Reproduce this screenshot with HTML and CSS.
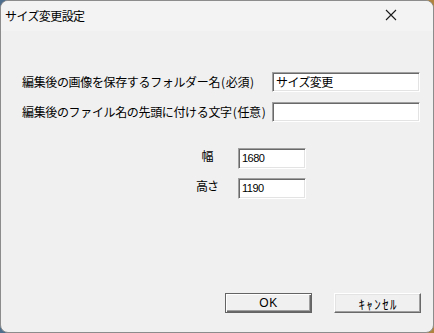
FILE: index.html
```html
<!DOCTYPE html>
<html lang="ja">
<head>
<meta charset="utf-8">
<link rel="stylesheet" href="styles.css">
</head>
<body>
<div class="window">
  <div class="titlebar">
    <span class="title">サイズ変更設定</span>
    <svg class="close" width="12" height="12" viewBox="0 0 12 12"><path d="M1 1L11 11M11 1L1 11" stroke="#1a1a1a" stroke-width="1.1" fill="none"/></svg>
  </div>
  <div class="content">
    <div class="fields">
      <label class="label">編集後の画像を保存するフォルダー名<span class="paren">(</span>必須<span class="paren">)</span></label>
      <div class="input wide">サイズ変更</div>
      <label class="label">編集後のファイル名の先頭に付ける文字<span class="paren">(</span>任意<span class="paren">)</span></label>
      <div class="input wide"></div>
    </div>
    <div class="size">
      <span class="slabel">幅</span>
      <div class="input num">1680</div>
      <span class="slabel">高さ</span>
      <div class="input num">1190</div>
    </div>
    <div class="buttons">
      <div class="btn default"><span>OK</span></div>
      <div class="btn"><span class="kana">ｷｬﾝｾﾙ</span></div>
    </div>
  </div>
</div>
</body>
</html>
```
FILE: styles.css
```css
html, body {
  margin: 0;
  padding: 0;
  width: 434px;
  height: 333px;
  overflow: hidden;
}
body {
  background: linear-gradient(90deg, #4f6f8f 0%, #6b7565 50%, #b08440 100%);
  font-family: "Noto Sans CJK JP", "Noto Sans", sans-serif;
  font-size: 12px;
  color: #000;
}
.window {
  box-sizing: border-box;
  width: 434px;
  height: 333px;
  border: 1px solid #8c8c8c;
  border-radius: 8px;
  background: #f0f0f0;
  display: flex;
  flex-direction: column;
  overflow: hidden;
}
.titlebar {
  height: 30px;
  flex: none;
  background: #f3f3f3;
  display: flex;
  align-items: center;
  justify-content: space-between;
  padding: 0 36px 0 4px;
}
.title {
  font-size: 12px;
  letter-spacing: -0.6px;
  line-height: 1;
  margin-top: -1px;
}
.close {
  display: block;
  margin-top: -2px;
}
.content {
  padding: 41px 12px 0 21px;
  display: flex;
  flex-direction: column;
}
.fields {
  display: grid;
  grid-template-columns: 250px 148px;
  row-gap: 10px;
  align-items: center;
}
.label {
  letter-spacing: -0.35px;
  line-height: 20px;
  white-space: nowrap;
}
.paren {
  margin: 0 1px;
}
.input {
  box-sizing: border-box;
  background: #fff;
  border-top: 1px solid #a0a0a0;
  border-left: 1px solid #a0a0a0;
  border-right: 1px solid #ffffff;
  border-bottom: 1px solid #ffffff;
  box-shadow: inset 1px 1px 0 #696969, inset -1px -1px 0 #e3e3e3;
  padding: 0 3px;
  line-height: 18px;
  white-space: nowrap;
}
.input.wide {
  height: 20px;
  letter-spacing: -0.6px;
}
.size {
  margin-top: 26px;
  margin-left: 169px;
  display: grid;
  grid-template-columns: 32px 68px;
  column-gap: 15px;
  row-gap: 9px;
  align-items: center;
}
.slabel {
  text-align: center;
  letter-spacing: -1px;
  line-height: 16px;
  margin-top: -6px;
}
.input.num {
  height: 21px;
  font-family: "Liberation Sans", Arial, sans-serif;
  font-size: 11px;
  letter-spacing: -0.5px;
  line-height: 19px;
}
.buttons {
  margin-top: 94px;
  display: flex;
  justify-content: flex-end;
  gap: 22px;
}
.btn {
  box-sizing: border-box;
  width: 87px;
  height: 20px;
  background: #f0f0f0;
  border-top: 1px solid #ffffff;
  border-left: 1px solid #ffffff;
  border-right: 1px solid #696969;
  border-bottom: 1px solid #696969;
  box-shadow: inset -1px -1px 0 #a0a0a0, inset 1px 1px 0 #e3e3e3;
  display: flex;
  align-items: center;
  justify-content: center;
  line-height: 1;
}
.btn .kana {
  font-size: 13px;
  letter-spacing: 1.4px;
  margin-right: -1.4px;
}
.btn.default {
  border: 1px solid #646464;
  box-shadow: inset 1px 1px 0 #ffffff, inset -1px -1px 0 #696969, inset -2px -2px 0 #a0a0a0;
}
.btn.default span {
  font-family: "Liberation Sans", Arial, sans-serif;
  font-size: 12px;
  letter-spacing: 0.5px;
}
```
